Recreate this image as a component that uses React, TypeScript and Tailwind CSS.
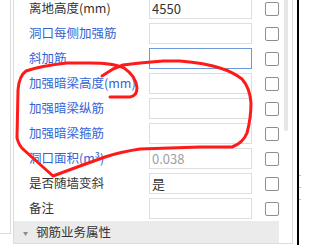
import React from 'react'

type Row = {
  label: string
  blue?: boolean
  value?: string
  muted?: boolean
  focused?: boolean
}

const rows: Row[] = [
  { label: '离地高度(mm)', value: '4550' },
  { label: '洞口每侧加强筋', blue: true },
  { label: '斜加筋', blue: true, focused: true },
  { label: '加强暗梁高度(mm)', blue: true },
  { label: '加强暗梁纵筋', blue: true },
  { label: '加强暗梁箍筋', blue: true },
  { label: '洞口面积(m³)', blue: true, value: '0.038', muted: true },
  { label: '是否随墙变斜', value: '是' },
  { label: '备注' },
]

function PropRow({ row }: { row: Row }) {
  return (
    <div className="grid h-[25px] grid-cols-[122px_103px_14px] items-center gap-x-[13px]">
      <div className={`pl-[15px] text-[12.5px] leading-none whitespace-nowrap ${row.blue ? 'text-[#3563d6]' : 'text-[#333]'}`}>
        {row.label}
      </div>
      <div
        className={`flex h-[21px] items-center border px-[2px] text-[13px] leading-none ${
          row.focused ? 'border-[#6d98dc]' : 'border-[#dedede]'
        } ${row.muted ? 'text-[#a0a0a0]' : 'text-[#333]'}`}
      >
        {row.value}
      </div>
      <div className="h-[14px] w-[14px] rounded-[2px] border border-[#8e8e8e] bg-white" />
    </div>
  )
}

export default function App() {
  return (
    <div
      className="relative flex h-[249px] w-[319px] overflow-hidden bg-white"
      style={{ fontFamily: '"Noto Sans CJK SC", "Noto Sans", sans-serif' }}
    >
      {/* neighbour panel */}
      <div className="h-[234px] w-[11px] shrink-0 border-r border-b border-[#dcdcdc]" />

      {/* property panel */}
      <div className="ml-[2px] flex h-[244px] w-[280px] shrink-0 border-x border-b border-[#dcdcdc]">
        <div className="w-[265px] overflow-hidden">
          <div className="-mt-[4px]">
            {rows.map((r) => (
              <PropRow key={r.label} row={r} />
            ))}
            <div className="flex h-[22px] items-center gap-[8px] bg-[#ebebeb] pl-[9px] text-[12.5px] leading-none text-[#333]">
              <span className="text-[5px] text-[#8a8a8a]">▼</span>
              <span>钢筋业务属性</span>
            </div>
          </div>
        </div>
        <div className="ml-[5px] w-[4px]">
          <div className="h-[131px] rounded-b-[2px] bg-[#e6e6e6]" />
        </div>
      </div>

      {/* window edge */}
      <div className="ml-[4px] h-[245px] w-[2px] shrink-0 bg-black" />
      <div className="flex h-[245px] w-[3px] flex-col gap-[11px] pt-[175px]">
        <div className="h-[1px] w-[2px] bg-[#bbb]" />
        <div className="h-[1px] w-[2px] bg-[#bbb]" />
        <div className="h-[1px] w-[2px] bg-[#bbb]" />
      </div>

      {/* hand-drawn annotation */}
      <svg className="pointer-events-none absolute inset-0" width="319" height="249" viewBox="0 0 319 249">
        <path
          d="M110 97 L130 97 Q137 96 137 88 Q136 76 124 68 Q114 63 90 63 L67 63 Q40 66 26 71 Q19 76 18 90 L17 138 Q19 146 24 150 L53 176 L80 166 L105 157 Q120 152 140 149 L200 147 L232 147 Q243 143 247 133 Q251 118 251 103 Q250 88 242 79 Q233 72 220 68 Q205 63 180 61 L163 61 L140 63 L123 65 L113 69 L102 76"
          fill="none"
          stroke="#ff1a1a"
          strokeWidth="3"
          strokeLinecap="round"
          strokeLinejoin="round"
        />
      </svg>
    </div>
  )
}
